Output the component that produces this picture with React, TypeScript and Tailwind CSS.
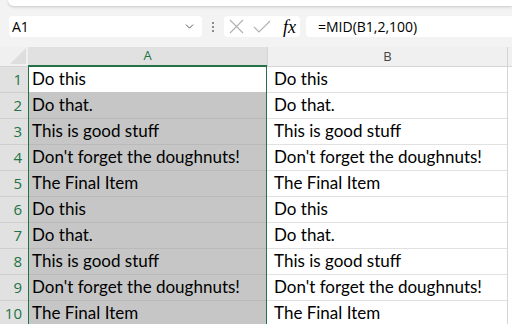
import { ChevronDown } from 'lucide-react';

const rows = [
  'Do this',
  'Do that.',
  'This is good stuff',
  "Don't forget the doughnuts!",
  'The Final Item',
  'Do this',
  'Do that.',
  'This is good stuff',
  "Don't forget the doughnuts!",
  'The Final Item',
];

export default function App() {
  return (
    <div className="w-[512px] h-[324px] overflow-hidden bg-[#f3f3f3] font-['Lato',sans-serif] text-black">
      {/* ribbon edge */}
      <div className="ml-[8px] h-[6px] bg-white rounded-bl-[8px] shadow-[0_1px_3px_rgba(0,0,0,0.18)]" />

      {/* formula bar */}
      <div className="mt-[10px] h-[21px] flex items-center">
        <div className="ml-[9px] w-[193px] h-[21px] bg-white rounded-[4px] flex items-center pl-[3px] pr-[6px] text-[14px] font-['Open_Sans',sans-serif]">
          <span className="flex-1">A1</span>
          <ChevronDown size={13} strokeWidth={1.5} className="text-[#333]" />
        </div>
        <div className="w-[22px] flex flex-col items-center gap-[2px]">
          <span className="w-[2px] h-[2px] bg-[#8a8a8a]" />
          <span className="w-[2px] h-[2px] bg-[#8a8a8a]" />
          <span className="w-[2px] h-[2px] bg-[#8a8a8a]" />
        </div>
        <div className="w-[76px] h-[21px] bg-white rounded-[4px] flex items-center pl-[5px]">
          <svg width="15" height="15" viewBox="0 0 15 15" fill="none" stroke="#b0b0b0" strokeWidth="1.1">
            <path d="M1 1L14 14M14 1L1 14" />
          </svg>
          <svg width="18" height="15" viewBox="0 0 18 15" fill="none" stroke="#b0b0b0" strokeWidth="1.1" className="ml-[9px]">
            <path d="M1 8L6 13L17 2" />
          </svg>
          <span className="font-['Liberation_Serif',serif] italic text-[18px] leading-none ml-[12px]">fx</span>
        </div>
        <div className="ml-[6px] flex-1 h-[21px] bg-white rounded-l-[4px] flex items-center pl-[12px] text-[14px] font-['Open_Sans',sans-serif]">
          =MID(B1,2,100)
        </div>
      </div>

      {/* grid */}
      <div className="mt-[10px] flex">
        {/* row headers */}
        <div className="w-[28px] shrink-0">
          <div className="h-[20px] bg-[#f0f0f0] border-b border-[#d4d4d4] relative overflow-hidden">
            <div className="absolute right-[2px] bottom-[2px] w-0 h-0 border-l-[16px] border-l-transparent border-b-[16px] border-b-[#dedede]" />
          </div>
          {rows.map((_, i) => (
            <div
              key={i}
              className="h-[26px] bg-[#e1e1e1] border-b border-[#cfcfcf] flex items-end justify-end pr-[6px] pb-[2px] text-[15px] text-[#217346] font-['Open_Sans',sans-serif]"
            >
              {i + 1}
            </div>
          ))}
        </div>

        {/* column A */}
        <div className="w-[239px] shrink-0">
          <div className="h-[20px] bg-[#e1e1e1] border-b-2 border-[#217346] flex items-center justify-center text-[13px] text-[#217346] font-['Open_Sans',sans-serif]">
            A
          </div>
          <div className="border-x border-[#217346]">
            {rows.map((t, i) => (
              <div
                key={i}
                className={
                  i === 0
                    ? 'h-[26px] bg-white border-b border-[#c6c6c6] flex items-end pl-[3px] pb-[1px] text-[17px] whitespace-nowrap'
                    : 'h-[26px] bg-[#c6c6c6] border-b border-[#bababa] flex items-end pl-[3px] pb-[1px] text-[17px] whitespace-nowrap'
                }
              >
                {t}
              </div>
            ))}
          </div>
        </div>

        {/* column B */}
        <div className="w-[241px] shrink-0 border-r border-[#d4d4d4]">
          <div className="h-[20px] bg-[#f0f0f0] border-b border-[#d4d4d4] border-l flex items-center justify-center text-[13px] text-[#444] font-['Open_Sans',sans-serif]">
            B
          </div>
          {rows.map((t, i) => (
            <div
              key={i}
              className="h-[26px] bg-white border-b border-[#e1e1e1] flex items-end pl-[7px] pb-[1px] text-[17px] whitespace-nowrap"
            >
              {t}
            </div>
          ))}
        </div>
        <div className="flex-1">
          <div className="h-[20px] bg-[#f0f0f0] border-b border-[#d4d4d4]" />
          <div className="h-[260px] bg-white" />
        </div>
      </div>
    </div>
  );
}
